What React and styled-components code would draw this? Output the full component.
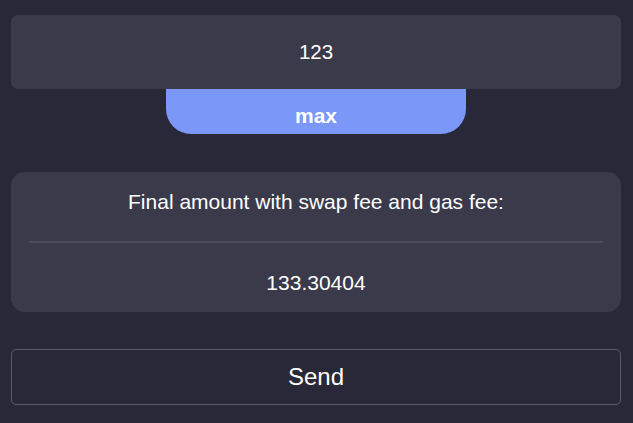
import { styled, createGlobalStyle } from "styled-components";

const GlobalStyle = createGlobalStyle`
  html, body {
    margin: 0;
    padding: 0;
    background: #282838;
    font-family: "Liberation Sans", Arial, sans-serif;
  }
`;

const App = () => {
  return (
    <Wrapper>
      <GlobalStyle />
      <AmountBox>123</AmountBox>
      <MaxButton>max</MaxButton>
      <Card>
        <CardLabel>Final amount with swap fee and gas fee:</CardLabel>
        <Divider />
        <CardValue>133.30404</CardValue>
      </Card>
      <SendButton>Send</SendButton>
    </Wrapper>
  );
};

const Wrapper = styled.div`
  display: flex;
  flex-direction: column;
  align-items: stretch;
  padding: 15px 12px 18px 11px;
  min-height: 423px;
  box-sizing: border-box;
`;

const AmountBox = styled.div`
  height: 74px;
  display: flex;
  align-items: center;
  justify-content: center;
  background: #3a3a4b;
  border-radius: 7px;
  color: #ffffff;
  font-size: 20.5px;
`;

const MaxButton = styled.div`
  align-self: center;
  width: 300px;
  height: 45px;
  display: flex;
  align-items: center;
  justify-content: center;
  padding-top: 9px;
  box-sizing: border-box;
  background: #7b97f8;
  border-radius: 0 0 25px 25px;
  color: #ffffff;
  font-size: 21px;
  font-weight: bold;
`;

const Card = styled.div`
  margin-top: 38px;
  height: 140px;
  box-sizing: border-box;
  background: #3a3a4b;
  border-radius: 14px;
  padding: 18px 18px 0;
  display: flex;
  flex-direction: column;
  align-items: stretch;
  color: #ffffff;
`;

const CardLabel = styled.div`
  text-align: center;
  font-size: 21px;
  line-height: 24px;
`;

const Divider = styled.div`
  height: 2px;
  background: #4b4b5e;
  margin-top: 27px;
`;

const CardValue = styled.div`
  text-align: center;
  font-size: 21px;
  line-height: 24px;
  margin-top: 28px;
`;

const SendButton = styled.div`
  margin-top: 37px;
  height: 56px;
  box-sizing: border-box;
  border: 1px solid #5a5a69;
  border-radius: 5px;
  display: flex;
  align-items: center;
  justify-content: center;
  color: #ffffff;
  font-size: 24px;
`;

export default App;
